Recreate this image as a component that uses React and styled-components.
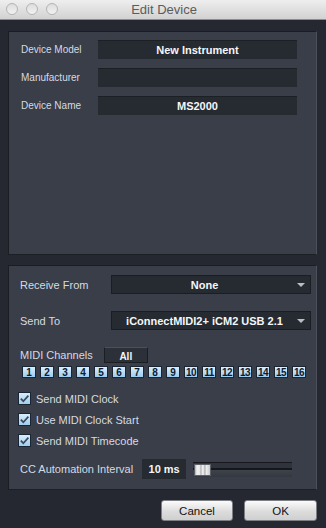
import styled, { createGlobalStyle } from "styled-components";

const GlobalStyle = createGlobalStyle`
  html, body {
    margin: 0;
    padding: 0;
    background: #252830;
  }
  * {
    box-sizing: border-box;
  }
`;

const Window = styled.div`
  width: 326px;
  height: 528px;
  display: flex;
  flex-direction: column;
  background: #252830;
  font-family: "Liberation Sans", Arial, sans-serif;
  overflow: hidden;
`;

const TitleBar = styled.div`
  position: relative;
  height: 20px;
  flex: none;
  display: flex;
  align-items: center;
  justify-content: center;
  background: linear-gradient(#eeeeee, #d2d2d2);
  border-bottom: 1px solid #8c8c8c;
`;

const Lights = styled.div`
  position: absolute;
  left: 6px;
  top: 3px;
  display: flex;
  gap: 8px;
`;

const Light = styled.span`
  width: 12px;
  height: 12px;
  border-radius: 50%;
  border: 1px solid #b4b4b4;
  background: linear-gradient(#dcdcdc, #f2f2f2);
`;

const Title = styled.div`
  font-size: 13px;
  color: #5c5c5c;
  margin-left: 2px;
`;

const Body = styled.div`
  flex: 1;
  display: flex;
  flex-direction: column;
  padding: 11px 9px 0 8px;
`;

const Panel = styled.div`
  height: ${({ $h }) => $h}px;
  background: #393e48;
  border: 1px solid;
  border-color: #1a1d22 #4a4f59 #1c1f25 #1a1d22;
  display: flex;
  flex-direction: column;
  padding: ${({ $pad }) => $pad};
  margin-bottom: 10px;
`;

const FieldGrid = styled.div`
  display: grid;
  grid-template-columns: 77px 1fr;
  grid-auto-rows: 19px;
  row-gap: 9px;
  align-items: center;
`;

const Label = styled.div`
  font-size: ${({ $size }) => $size || 11}px;
  color: #d6dae1;
  white-space: nowrap;
`;

const Field = styled.div`
  height: 19px;
  background: #262a31;
  border-top: 1px solid #1c1f24;
  display: flex;
  align-items: center;
  justify-content: center;
  font-size: 11px;
  font-weight: bold;
  color: #f4f6f8;
`;

const SelectGrid = styled.div`
  display: grid;
  grid-template-columns: 91px 1fr;
  grid-auto-rows: 19px;
  row-gap: 17px;
  align-items: center;
`;

const Select = styled.div`
  position: relative;
  height: 19px;
  background: #262a31;
  border: 1px solid #1a1d22;
  display: flex;
  align-items: center;
  justify-content: center;
  padding-right: 13px;
  font-size: 11px;
  font-weight: bold;
  color: #f4f6f8;
  white-space: nowrap;
`;

const Arrow = styled.span`
  position: absolute;
  right: 5px;
  top: 7px;
  width: 0;
  height: 0;
  border-left: 4px solid transparent;
  border-right: 4px solid transparent;
  border-top: 4px solid #b9bec6;
`;

const ChannelHead = styled.div`
  display: flex;
  align-items: center;
  margin-top: 17px;
  height: 16px;
`;

const AllButton = styled.div`
  margin-left: 11px;
  width: 44px;
  height: 16px;
  background: #2c3038;
  border: 1px solid #1b1e23;
  border-top-color: #4a4f58;
  display: flex;
  align-items: center;
  justify-content: center;
  font-size: 10px;
  font-weight: bold;
  color: #f4f6f8;
  padding-top: 2px;
`;

const Channels = styled.div`
  display: flex;
  gap: 4px;
  margin: 3px 0 0 2px;
`;

const Channel = styled.div`
  width: 14px;
  height: 12px;
  background: linear-gradient(#d9eefc, #9dcdf0);
  border: 1px solid #1a2633;
  display: flex;
  align-items: center;
  justify-content: center;
  font-size: 10px;
  font-weight: bold;
  color: #0e1a2c;
  letter-spacing: ${({ $wide }) => ($wide ? -0.6 : 0)}px;
`;

const Checks = styled.div`
  display: flex;
  flex-direction: column;
  gap: 8px;
  margin-top: 14px;
`;

const CheckRow = styled.label`
  display: flex;
  align-items: center;
  gap: 5px;
  height: 13px;
  margin-left: -2px;
  font-size: 11px;
  color: #d6dae1;
`;

const Box = styled.span`
  width: 13px;
  height: 13px;
  background: linear-gradient(#d8edfb, #9fcdef);
  border: 1px solid #1a2633;
  display: flex;
  align-items: center;
  justify-content: center;
`;

const IntervalRow = styled.div`
  display: flex;
  align-items: center;
  margin-top: 12px;
  height: 20px;
`;

const ValueBox = styled.div`
  margin-left: 9px;
  width: 44px;
  height: 20px;
  background: #262a31;
  display: flex;
  align-items: center;
  justify-content: center;
  font-size: 11px;
  font-weight: bold;
  color: #f4f6f8;
`;

const Track = styled.div`
  margin-left: 7px;
  width: 99px;
  height: 15px;
  display: flex;
  align-items: center;
  padding-left: 1px;
  border-top: 1px solid #17191d;
  background: linear-gradient(
    #2f333b 0,
    #2f333b 5px,
    #15171b 5px,
    #15171b 7px,
    #3d424b 7px,
    #343841 100%
  );
`;

const Thumb = styled.div`
  width: 17px;
  height: 12px;
  border: 1px solid #5d6066;
  background: linear-gradient(
    90deg,
    #a9abae 0,
    #f2f2f2 2px,
    #e6e6e6 5px,
    #9ea0a4 6px,
    #f2f2f2 7px,
    #dedede 9px,
    #9ea0a4 10px,
    #f0f0f0 11px,
    #c9cacc 15px
  );
`;

const Footer = styled.div`
  display: flex;
  justify-content: flex-end;
  gap: 11px;
`;

const Button = styled.div`
  width: ${({ $w }) => $w}px;
  height: 21px;
  border-radius: 3px;
  border: 1px solid #7c7f84;
  background: linear-gradient(#fbfbfb, #dcdcdc 55%, #cfcfcf);
  display: flex;
  align-items: center;
  justify-content: center;
  font-size: 11.5px;
  color: #111;
`;

function Check() {
  return (
    <svg width="11" height="11" viewBox="0 0 11 11">
      <path d="M1.8 5.6 L4.3 8.2 L9.4 2.6" fill="none" stroke="#3b4b5c" strokeWidth="1.7" />
    </svg>
  );
}

const channels = Array.from({ length: 16 }, (_, i) => i + 1);
const options = ["Send MIDI Clock", "Use MIDI Clock Start", "Send MIDI Timecode"];

export default function App() {
  return (
    <Window>
      <GlobalStyle />
      <TitleBar>
        <Lights>
          <Light />
          <Light />
          <Light />
        </Lights>
        <Title>Edit Device</Title>
      </TitleBar>
      <Body>
        <Panel $h={224} $pad="8px 19px 0 12px">
          <FieldGrid>
            <Label $size={10}>Device Model</Label>
            <Field>New Instrument</Field>
            <Label $size={10}>Manufacturer</Label>
            <Field />
            <Label $size={10}>Device Name</Label>
            <Field>MS2000</Field>
          </FieldGrid>
        </Panel>
        <Panel $h={225} $pad="9px 5px 0 11px">
          <SelectGrid>
            <Label>Receive From</Label>
            <Select>
              None
              <Arrow />
            </Select>
            <Label>Send To</Label>
            <Select>
              iConnectMIDI2+ iCM2 USB 2.1
              <Arrow />
            </Select>
          </SelectGrid>
          <ChannelHead>
            <Label>MIDI Channels</Label>
            <AllButton>All</AllButton>
          </ChannelHead>
          <Channels>
            {channels.map((n) => (
              <Channel key={n} $wide={n > 9}>
                {n}
              </Channel>
            ))}
          </Channels>
          <Checks>
            {options.map((o) => (
              <CheckRow key={o}>
                <Box>
                  <Check />
                </Box>
                {o}
              </CheckRow>
            ))}
          </Checks>
          <IntervalRow>
            <Label>CC Automation Interval</Label>
            <ValueBox>10 ms</ValueBox>
            <Track>
              <Thumb />
            </Track>
          </IntervalRow>
        </Panel>
        <Footer>
          <Button $w={72}>Cancel</Button>
          <Button $w={73}>OK</Button>
        </Footer>
      </Body>
    </Window>
  );
}
